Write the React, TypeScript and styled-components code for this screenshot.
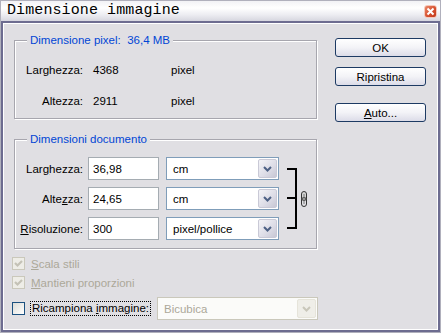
import React from "react";
import styled, { createGlobalStyle } from "styled-components";

const GlobalStyle = createGlobalStyle`
  html, body {
    margin: 0;
    padding: 0;
    background: #e0dfe3;
  }
  body {
    font-family: "Liberation Sans", Arial, sans-serif;
    font-size: 11.5px;
    color: #000;
  }
`;

function Chevron({ color }: { color: string }) {
  return (
    <svg width="9" height="6" viewBox="0 0 9 6">
      <path d="M1 1 L4.5 4.5 L8 1" fill="none" stroke={color} strokeWidth="2" />
    </svg>
  );
}

function Check({ color }: { color: string }) {
  return (
    <svg width="11" height="11" viewBox="0 0 11 11">
      <path d="M2 5 L4.5 7.5 L9 3" fill="none" stroke={color} strokeWidth="2.2" />
    </svg>
  );
}

function Bracket() {
  return (
    <svg width="30" height="83" viewBox="0 0 30 83">
      <path
        d="M8 12 H17 V71 H8 M8 41 H17"
        fill="none"
        stroke="#000"
        strokeWidth="2"
      />
      <rect x="22.5" y="34.5" width="5" height="9" rx="2.5" fill="#d4d4d4" stroke="#333" />
      <rect x="22.5" y="40.5" width="5" height="9" rx="2.5" fill="none" stroke="#333" />
      <path d="M25 37 V47" stroke="#777" strokeWidth="1" />
    </svg>
  );
}

function Select({ value, disabled }: { value: string; disabled?: boolean }) {
  return (
    <SelectBox $disabled={disabled}>
      <SelectText>{value}</SelectText>
      <ArrowButton $disabled={disabled}>
        <Chevron color={disabled ? "#c9c7ba" : "#4d6185"} />
      </ArrowButton>
    </SelectBox>
  );
}

function App() {
  return (
    <>
      <GlobalStyle />
      <Window>
        <TitleBar>
          <Title>Dimensione immagine</Title>
          <CloseButton>
            <svg width="9" height="9" viewBox="0 0 9 9">
              <path d="M1.5 1.5 L7.5 7.5 M7.5 1.5 L1.5 7.5" stroke="#fff" strokeWidth="2" />
            </svg>
          </CloseButton>
        </TitleBar>
        <Body>
          <LeftColumn>
            <Group>
              <Legend>Dimensione pixel:&nbsp; 36,4 MB</Legend>
              <InfoGrid>
                <Label>Larghezza:</Label>
                <span>4368</span>
                <span>pixel</span>
                <Label>Altezza:</Label>
                <span>2911</span>
                <span>pixel</span>
              </InfoGrid>
            </Group>

            <DocGroup>
              <Legend>Dimensioni documento</Legend>
              <DocGrid>
                <Label>
                  Lar<u>g</u>hezza:
                </Label>
                <Input>36,98</Input>
                <Select value="cm" />
                <BracketCell>
                  <Bracket />
                </BracketCell>
                <Label>
                  Alte<u>z</u>za:
                </Label>
                <Input>24,65</Input>
                <Select value="cm" />
                <Label>
                  <u>R</u>isoluzione:
                </Label>
                <Input>300</Input>
                <Select value="pixel/pollice" />
              </DocGrid>
            </DocGroup>

            <Options>
              <CheckRow $disabled>
                <CheckBox $disabled>
                  <Check color="#c4c2b6" />
                </CheckBox>
                <span>
                  <u>S</u>cala stili
                </span>
              </CheckRow>
              <CheckRow $disabled>
                <CheckBox $disabled>
                  <Check color="#c4c2b6" />
                </CheckBox>
                <span>
                  <u>M</u>antieni proporzioni
                </span>
              </CheckRow>
              <ResampleRow>
                <CheckBox />
                <FocusLabel>
                  Ricampiona <u>i</u>mmagine:
                </FocusLabel>
                <Select value="Bicubica" disabled />
              </ResampleRow>
            </Options>
          </LeftColumn>

          <ButtonColumn>
            <Button>OK</Button>
            <Button>Ripristina</Button>
            <Button $gap={17}>
              <u>A</u>uto...
            </Button>
          </ButtonColumn>
        </Body>
      </Window>
    </>
  );
}

const Window = styled.div`
  width: 441px;
  height: 333px;
  box-sizing: border-box;
  display: flex;
  flex-direction: column;
  border: 1px solid #b0b0bc;
  background: #e0dfe3;
`;

const TitleBar = styled.div`
  height: 20px;
  flex: none;
  display: flex;
  align-items: center;
  justify-content: space-between;
  padding: 0 3px 0 6px;
  background: linear-gradient(
    to bottom,
    #f2f2f5 0%,
    #ffffff 35%,
    #ececf1 70%,
    #d6d6df 100%
  );
`;

const Title = styled.span`
  font-family: "Liberation Mono", "Courier New", monospace;
  font-size: 15px;
  line-height: 20px;
  color: #000;
  letter-spacing: 0.1px;
`;

const CloseButton = styled.div`
  width: 13px;
  height: 13px;
  box-sizing: border-box;
  border-radius: 3px;
  border: 1px solid #f4c8bb;
  background: linear-gradient(135deg, #e9886a 0%, #d6502f 55%, #c23a1c 100%);
  display: flex;
  align-items: center;
  justify-content: center;
`;

const Body = styled.div`
  flex: 1;
  display: flex;
  gap: 18px;
  padding: 11px 11px 0 9px;
  border: 2px solid #6d6c90;
  box-shadow: inset 1px 1px 0 #fff, inset -1px -1px 0 #fff;
`;

const LeftColumn = styled.div`
  width: 305px;
  display: flex;
  flex-direction: column;
`;

const Group = styled.fieldset`
  margin: 0 0 0 2px;
  width: 303px;
  box-sizing: border-box;
  min-inline-size: 0;
  padding: 16px 0 10px 0;
  border: 1px solid #a7a6ae;
  box-shadow: inset 1px 1px 0 #fff, 1px 1px 0 #fff;
`;

const DocGroup = styled(Group)`
  margin-top: 14px;
  padding: 11px 0 8px 0;
`;

const Legend = styled.legend`
  margin-left: 12px;
  padding: 0 3px;
  line-height: 13px;
  color: #0046d5;
  background: #e0dfe3;
`;

const InfoGrid = styled.div`
  display: grid;
  grid-template-columns: 68px 68px 1fr;
  column-gap: 10px;
  row-gap: 17px;
  line-height: 14px;
`;

const Label = styled.span`
  text-align: right;
  align-self: center;
  white-space: nowrap;
`;

const DocGrid = styled.div`
  display: grid;
  grid-template-columns: 68px 83px 113px 30px;
  grid-auto-rows: 23px;
  row-gap: 7px;
`;

const Input = styled.div`
  width: 71px;
  height: 23px;
  margin-left: 5px;
  box-sizing: border-box;
  border: 1px solid #a5acb2;
  background: #fff;
  padding: 0 4px;
  display: flex;
  align-items: center;
`;

const SelectBox = styled.div<{ $disabled?: boolean }>`
  height: 23px;
  box-sizing: border-box;
  border: 1px solid ${(p) => (p.$disabled ? "#cac8bb" : "#7f9db9")};
  background: ${(p) => (p.$disabled ? "#fbfbf9" : "#fff")};
  color: ${(p) => (p.$disabled ? "#aca899" : "#000")};
  display: flex;
  align-items: stretch;
  padding: 1px;
`;

const SelectText = styled.span`
  flex: 1;
  display: flex;
  align-items: center;
  padding-left: 5px;
  white-space: nowrap;
`;

const ArrowButton = styled.span<{ $disabled?: boolean }>`
  width: 19px;
  box-sizing: border-box;
  display: flex;
  align-items: center;
  justify-content: center;
  border: 1px solid ${(p) => (p.$disabled ? "#e6e4da" : "#c9c9d6")};
  border-radius: 2px;
  background: ${(p) =>
    p.$disabled
      ? "#efeee8"
      : "linear-gradient(135deg, #f4f4f8 0%, #dcdce6 60%, #c7c7d4 100%)"};
`;

const BracketCell = styled.div`
  grid-column: 4;
  grid-row: 1 / span 3;
`;

const Options = styled.div`
  display: flex;
  flex-direction: column;
  margin-top: 7px;
`;

const CheckRow = styled.div<{ $disabled?: boolean }>`
  display: flex;
  align-items: center;
  gap: 6px;
  height: 15px;
  margin-bottom: 4px;
  color: ${(p) => (p.$disabled ? "#aca899" : "#000")};
`;

const CheckBox = styled.span<{ $disabled?: boolean }>`
  width: 13px;
  height: 13px;
  flex: none;
  box-sizing: border-box;
  display: flex;
  align-items: center;
  justify-content: center;
  border: 1px solid ${(p) => (p.$disabled ? "#cac8bb" : "#1c5180")};
  background: ${(p) =>
    p.$disabled ? "#eeede7" : "linear-gradient(135deg, #dcdcd7 0%, #ffffff 100%)"};
`;

const ResampleRow = styled.div`
  display: grid;
  grid-template-columns: 13px 122px 161px;
  column-gap: 5px;
  align-items: center;
  height: 23px;
  margin-top: 3px;
`;

const FocusLabel = styled.span`
  justify-self: start;
  border: 1px dotted #000;
  padding: 0 1px;
  line-height: 13px;
  white-space: nowrap;
`;

const ButtonColumn = styled.div`
  width: 91px;
  display: flex;
  flex-direction: column;
  padding-top: 4px;
`;

const Button = styled.div<{ $gap?: number }>`
  height: 19px;
  margin-top: ${(p) => p.$gap ?? 10}px;
  box-sizing: border-box;
  border: 1px solid #1d3a63;
  border-radius: 3px;
  background: linear-gradient(to bottom, #ffffff 0%, #f3f3f7 50%, #dcdce8 100%);
  display: flex;
  align-items: center;
  justify-content: center;
  &:first-child {
    margin-top: 0;
  }
`;

export default App;
